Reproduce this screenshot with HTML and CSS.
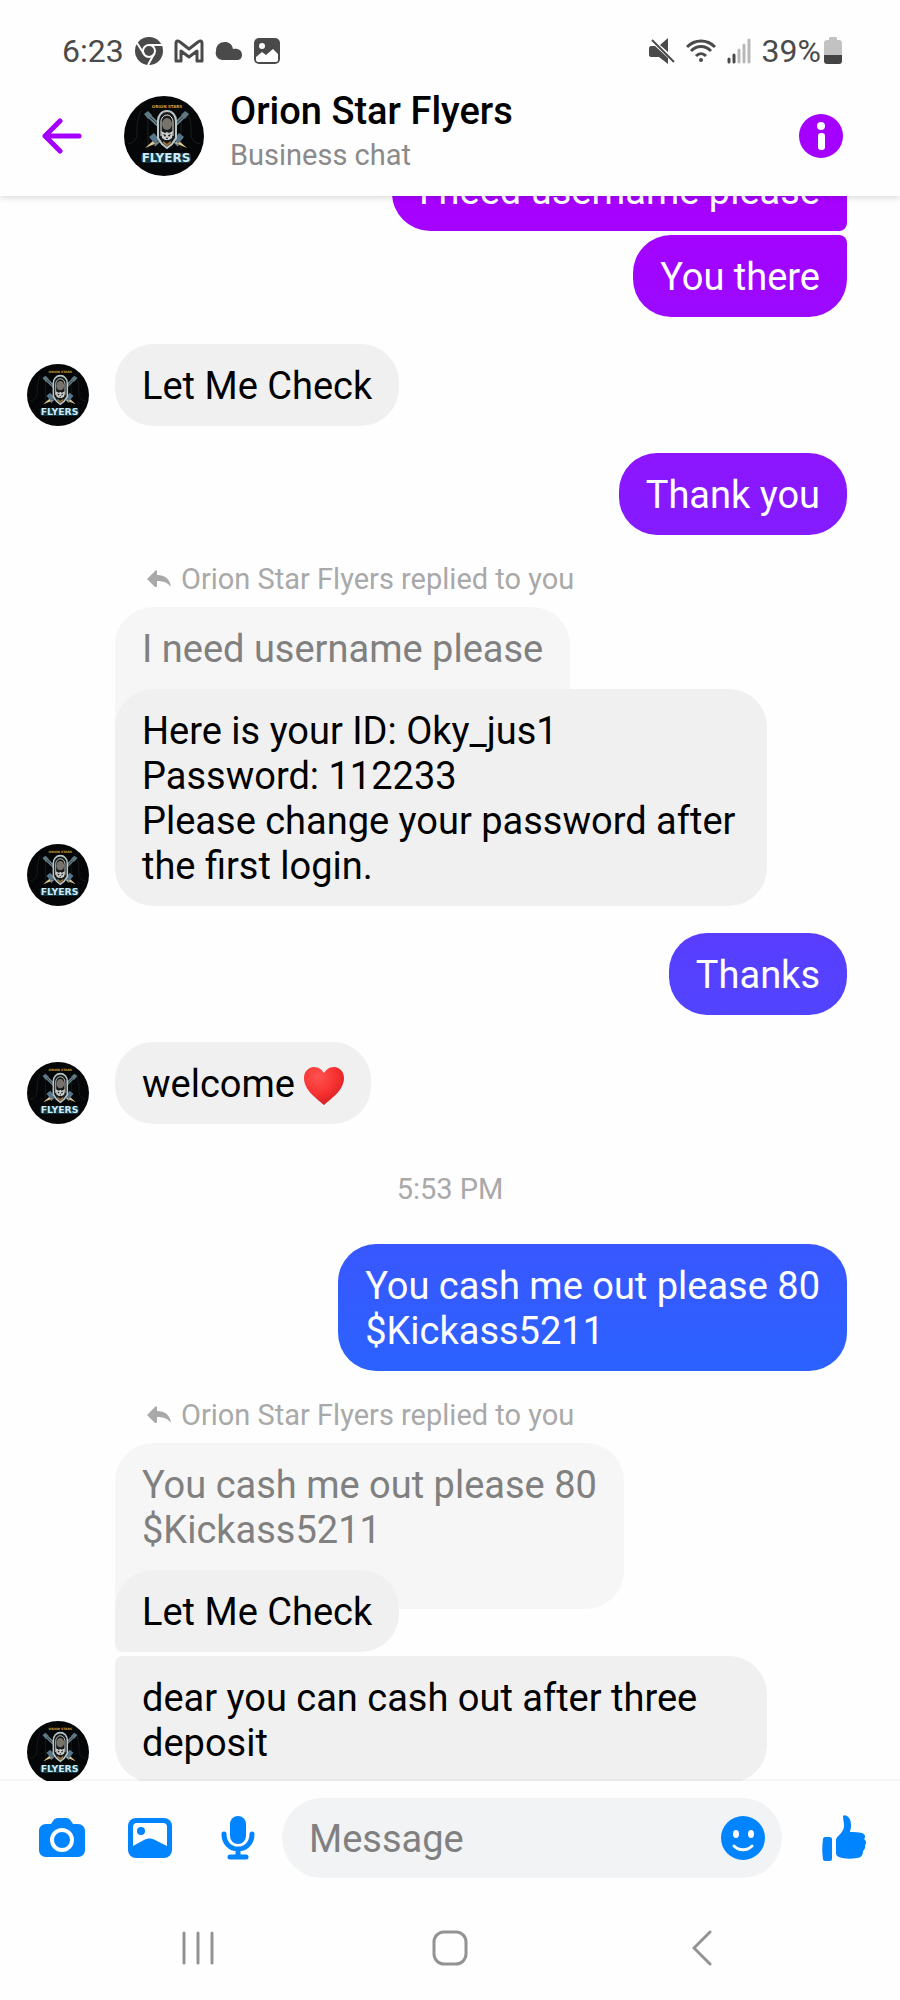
FILE: index.html
```
<!DOCTYPE html>
<html lang="en">
<head>
    <meta charset="UTF-8">
    <meta name="viewport" content="width=device-width, initial-scale=1.0">
    <title>Orion Star Flyers</title>
    <link rel="stylesheet" href="styles.css">
</head>
<body>
    <!-- shared drawings -->
    <svg class="defs" aria-hidden="true">
        <symbol id="logo" viewBox="0 0 80 80">
            <circle cx="40" cy="40" r="40" fill="#050607"/>
            <path d="M4 48c8-2 9-6 9-14s2-15 4-19M76 48c-8-2-9-6-9-14s-2-15-4-19M24 20v34M57 20v34" fill="none" stroke="#1b2023" stroke-width="1"/>
            <text x="43" y="12" class="logo-top">ORION STARS</text>
            <path d="M24 19l31 30M61 19L30 49" stroke="#6c828b" stroke-width="4"/>
            <path d="M24 19l31 30M61 19L30 49" stroke="#26343a" stroke-width="1"/>
            <path d="M20 18l4-3 4 4-4 4zM65 18l-4-3-4 4 4 4z" fill="#5f7984"/>
            <path d="M21 52l9-8 3 3zM63 52l-9-8-3 3z" fill="#e0c48c"/>
            <path d="M25 41l5-4 5 6-4 5zM60 41l-5-4-5 6 4 5z" fill="#55758a"/>
            <path d="M34 42V25c0-6 4-10 9-10s9 4 9 10v17l-4 6-5 4-5-4z" fill="#171a1b" stroke="#b9c6c9" stroke-width="2"/>
            <path d="M37 40V26c0-4 3-7 6-7s6 3 6 7v14" fill="none" stroke="#e4e4df" stroke-width="1"/>
            <ellipse cx="43" cy="28" rx="5" ry="6" fill="#77736b"/>
            <path d="M37 35l4 2 2-1 2 1 4-2-1 7-3 2h-4l-3-2z" fill="#c9cdca"/>
            <path d="M39 38l3 1-1 2zM47 38l-3 1 1 2zM43 41l1 2h-2z" fill="#111"/>
            <path d="M39 46l4 3 4-3" fill="none" stroke="#98713c" stroke-width="2"/>
            <rect x="17" y="57" width="50" height="10" rx="3" fill="#16333d"/>
            <text x="42" y="66" class="logo-name">FLYERS</text>
        </symbol>
        <symbol id="reply" viewBox="0 0 24 18">
            <path d="M10 1v4c8 0 13 4 14 12-3-4-7-6-14-6v5c0 1-1 1-2 1L1 10c-1-1-1-1 0-2l7-7c1-1 2-1 2 0z" fill="currentColor"/>
        </symbol>
    </svg>

    <div class="status-bar">
        <span class="time">6:23</span>
        <svg class="chrome" width="28" height="28" viewBox="0 0 28 28">
            <circle cx="14" cy="14" r="14" fill="#4a4a4a"/>
            <circle cx="14" cy="14" r="6" fill="none" stroke="#fff" stroke-width="2"/>
            <path d="M14 8h13M9 17L2 6M19 17l-6 11" stroke="#fff" stroke-width="2"/>
        </svg>
        <svg width="30" height="24" viewBox="0 0 30 24" fill="none" stroke="#4a4a4a" stroke-width="3" stroke-linejoin="round">
            <path d="M2 4c0-2 2-3 4-1l9 7 9-7c2-2 4-1 4 1v18h-5V12l-8 6-8-6v10H2z"/>
        </svg>
        <svg width="28" height="20" viewBox="0 0 28 20">
            <path d="M7 19a7 7 0 0 1-6-9C1 4 5 1 10 1c4 0 7 2 8 7 5-1 9 1 9 6 0 3-2 5-5 5z" fill="#4a4a4a"/>
        </svg>
        <svg width="26" height="26" viewBox="0 0 26 26">
            <rect width="26" height="26" rx="5" fill="#4a4a4a"/>
            <circle cx="8" cy="8" r="3" fill="#fff"/>
            <path d="M2 19l6-5 4 3 7-6 5 5v6c0 1-1 2-2 2H4c-1 0-2-1-2-2z" fill="#fff"/>
        </svg>
        <span class="spacer"></span>
        <svg class="mute" width="26" height="26" viewBox="0 0 26 26">
            <path d="M2 8h4l13 12v6l-9-7H2c-1 0-2-1-2-2v-7c0-1 1-2 2-2zM11 7l8-7v14z" fill="#4a4a4a"/>
            <path d="M3 2l22 22" stroke="#4a4a4a" stroke-width="2"/>
        </svg>
        <svg class="wifi" width="30" height="24" viewBox="0 0 30 24" fill="none" stroke="#4a4a4a" stroke-width="3">
            <path d="M1 8c8-8 20-8 28 0M5 12c6-6 14-6 20 0M10 17c3-3 7-3 10 0"/>
            <circle cx="15" cy="21" r="2" fill="#4a4a4a" stroke="none"/>
        </svg>
        <svg class="signal" width="24" height="26" viewBox="0 0 24 26" stroke-width="3" stroke-linecap="round">
            <path d="M2 21v3M7 17v7" stroke="#4a4a4a"/>
            <path d="M12 12v12M17 7v17M22 2v22" stroke="#b8b8b8"/>
        </svg>
        <span>39%</span>
        <svg class="battery" width="18" height="28" viewBox="0 0 18 28">
            <path d="M5 1c0-1 1-1 1-1h6s1 0 1 1v2h2c2 0 3 1 3 3v12H0V6c0-2 1-3 3-3h2z" fill="#c2c2c2"/>
            <path d="M0 18h18v6c0 2-1 3-3 3H3c-2 0-3-1-3-3z" fill="#444"/>
        </svg>
    </div>

    <header class="header">
        <button class="icon-button" aria-label="Back">
            <svg width="40" height="36" viewBox="0 0 40 36" fill="none" stroke="#a500ff" stroke-width="5" stroke-linecap="round" stroke-linejoin="round">
                <path d="M37 18H3M18 3L3 18l15 15"/>
            </svg>
        </button>
        <svg class="header-avatar"><use href="#logo"/></svg>
        <div class="header-text">
            <h1>Orion Star Flyers</h1>
            <p>Business chat</p>
        </div>
        <button class="icon-button" aria-label="Chat information">
            <svg width="44" height="44" viewBox="0 0 44 44">
                <circle cx="22" cy="22" r="22" fill="#a500ff"/>
                <circle cx="22" cy="12" r="4" fill="#fff"/>
                <rect x="19" y="19" width="7" height="17" rx="3" fill="#fff"/>
            </svg>
        </button>
    </header>

    <main class="chat">
        <div class="messages">
            <div class="group sent">
                <div class="bubble first">I need username please</div>
                <div class="bubble last">You there</div>
            </div>

            <div class="group">
                <svg class="avatar"><use href="#logo"/></svg>
                <div class="stack">
                    <div class="bubble">Let Me Check</div>
                </div>
            </div>

            <div class="group sent">
                <div class="bubble">Thank you</div>
            </div>

            <div class="group">
                <svg class="avatar"><use href="#logo"/></svg>
                <div class="stack">
                    <div class="reply-label"><svg><use href="#reply"/></svg>Orion Star Flyers replied to you</div>
                    <div class="bubble quote">I need username please</div>
                    <div class="bubble">Here is your ID: Oky_jus1<br>Password: 112233<br>Please change your password after the first login.</div>
                </div>
            </div>

            <div class="group sent">
                <div class="bubble">Thanks</div>
            </div>

            <div class="group">
                <svg class="avatar"><use href="#logo"/></svg>
                <div class="stack">
                    <div class="bubble">welcome
                        <svg class="heart" viewBox="0 0 40 38" role="img" aria-label="red heart">
                            <defs>
                                <radialGradient id="heartFill" cx="35%" cy="25%" r="80%">
                                    <stop offset="0" stop-color="#ff5350"/>
                                    <stop offset="0.6" stop-color="#f5302f"/>
                                    <stop offset="1" stop-color="#cf1b22"/>
                                </radialGradient>
                            </defs>
                            <path d="M20 38C12 31 0 23 0 11 0 4 5 0 10 0c5 0 8 3 10 6 2-3 5-6 10-6 5 0 10 4 10 11 0 12-12 20-20 27z" fill="url(#heartFill)"/>
                        </svg>
                    </div>
                </div>
            </div>

            <div class="timestamp">5:53 PM</div>

            <div class="group sent">
                <div class="bubble">You cash me out please 80<br>$Kickass5211</div>
            </div>

            <div class="group">
                <svg class="avatar"><use href="#logo"/></svg>
                <div class="stack">
                    <div class="reply-label"><svg><use href="#reply"/></svg>Orion Star Flyers replied to you</div>
                    <div class="bubble quote">You cash me out please 80<br>$Kickass5211</div>
                    <div class="bubble first">Let Me Check</div>
                    <div class="bubble last">dear you can cash out after three deposit</div>
                </div>
            </div>
        </div>
    </main>

    <footer class="composer">
        <button class="icon-button" aria-label="Camera">
            <svg width="48" height="40" viewBox="0 0 48 40">
                <path d="M15 3c1-2 3-3 5-3h8c2 0 4 1 5 3l2 3h5c4 0 7 3 7 7v19c0 4-3 7-7 7H8c-4 0-7-3-7-7V13c0-4 3-7 7-7h5z" fill="#0084ff"/>
                <circle cx="24" cy="22" r="10" fill="none" stroke="#fff" stroke-width="4"/>
            </svg>
        </button>
        <button class="icon-button" aria-label="Photos">
            <svg width="44" height="40" viewBox="0 0 44 40">
                <rect width="44" height="40" rx="8" fill="#0084ff"/>
                <path d="M5 9c0-2 1-4 4-4h26c3 0 4 2 4 4v19l-12-6c-4-2-7-2-11 0L5 28z" fill="#fff"/>
                <circle cx="13" cy="13" r="4" fill="#0084ff"/>
            </svg>
        </button>
        <button class="icon-button" aria-label="Voice message">
            <svg width="34" height="44" viewBox="0 0 34 44">
                <rect x="9" y="0" width="16" height="28" rx="8" fill="#0084ff"/>
                <path d="M3 18c0 9 6 15 14 15s14-6 14-15M17 33v8M9 41h16" fill="none" stroke="#0084ff" stroke-width="5" stroke-linecap="round"/>
            </svg>
        </button>
        <div class="message-box">
            <input type="text" placeholder="Message" aria-label="Message">
            <button class="emoji-button" aria-label="Choose an emoji">
                <svg width="44" height="44" viewBox="0 0 44 44">
                    <circle cx="22" cy="22" r="22" fill="#0084ff"/>
                    <ellipse cx="15" cy="18" rx="3" ry="4" fill="#fff"/>
                    <ellipse cx="30" cy="18" rx="3" ry="4" fill="#fff"/>
                    <path d="M13 30c5 5 13 5 18 0" fill="none" stroke="#fff" stroke-width="3" stroke-linecap="round"/>
                </svg>
            </button>
        </div>
        <button class="icon-button like" aria-label="Like">
            <svg width="44" height="46" viewBox="0 0 44 46" fill="#0084ff">
                <path d="M3 22h5c1 0 2 1 2 2v20c0 1-1 2-2 2H3c-1 0-2-1-2-2-1-6-1-13 0-20 0-1 1-2 2-2z"/>
                <path d="M21 1c1-1 2-1 4 0 4 2 5 9 3 16 4 0 8 0 12 1 3 1 4 4 2 6 3 2 2 5 1 6 1 3-1 5-2 6 0 4-2 7-6 7-6 1-13 1-18-1-2-1-3-2-3-4V25c0-4 8-7 8-14 0-4-1-7-1-10z"/>
            </svg>
        </button>
    </footer>

    <nav class="system-nav">
        <button aria-label="Recent apps">
            <svg width="34" height="34" viewBox="0 0 34 34" stroke="#939393" stroke-width="3" stroke-linecap="round">
                <path d="M3 2v30M17 2v30M31 2v30"/>
            </svg>
        </button>
        <button aria-label="Home">
            <svg width="36" height="36" viewBox="0 0 36 36">
                <rect x="2" y="2" width="32" height="32" rx="10" fill="none" stroke="#939393" stroke-width="3"/>
            </svg>
        </button>
        <button aria-label="Back">
            <svg width="20" height="36" viewBox="0 0 20 36" fill="none" stroke="#939393" stroke-width="3" stroke-linecap="round">
                <path d="M18 2L2 18l16 16"/>
            </svg>
        </button>
    </nav>
</body>
</html>
```
FILE: styles.css
```
* {
    box-sizing: border-box;
}
body {
    display: flex;
    flex-direction: column;
    height: 100vh;
    margin: 0;
    background-color: #fefefe;
    color: #000;
    font-family: Roboto, Arial, sans-serif;
}
svg {
    display: block;
    flex: none;
}
button {
    display: flex;
    align-items: center;
    justify-content: center;
    padding: 0;
    border: none;
    background: none;
    cursor: pointer;
}
.defs {
    display: none;
}
.logo-top {
    font: bold 4px "DejaVu Sans", sans-serif;
    fill: #d2a23c;
    text-anchor: middle;
}
.logo-name {
    font: bold 12px "DejaVu Sans", sans-serif;
    fill: #c9edfa;
    text-anchor: middle;
}

/* phone status bar */
.status-bar {
    display: flex;
    align-items: center;
    flex: none;
    gap: 11px;
    padding: 27px 58px 0 62px;
    color: #4a4a4a;
    font-size: 32px;
    line-height: 48px;
}
.status-bar .spacer {
    flex: 1;
}
.status-bar .battery {
    margin-left: -8px;
}

/* header */
.header {
    position: relative;
    z-index: 1;
    display: flex;
    align-items: center;
    flex: none;
    height: 121px;
    padding: 0 35px 0 18px;
    background-color: #fefefe;
    box-shadow: 0 2px 6px rgba(0, 0, 0, 0.14);
    clip-path: inset(0 0 -10px 0);
}
.icon-button {
    flex: none;
    width: 88px;
    height: 80px;
}
.header-avatar {
    width: 80px;
    height: 80px;
    margin: 0 26px 0 18px;
}
.header-text {
    flex: 1;
}
.header-text h1 {
    margin: 0;
    font-size: 38px;
    font-weight: 500;
    line-height: 38px;
}
.header-text p {
    margin: 0;
    color: #8a8a8a;
    font-size: 29px;
    line-height: 50px;
}

/* conversation, kept scrolled to the newest message */
.chat {
    display: flex;
    flex: 1;
    flex-direction: column;
    justify-content: flex-end;
    min-height: 0;
    overflow: hidden;
}
.messages {
    display: flex;
    flex: none;
    flex-direction: column;
    gap: 27px;
    margin-bottom: -2px;
}
.group {
    display: flex;
    align-items: flex-end;
    gap: 26px;
    padding: 0 53px 0 27px;
}
.group.sent {
    flex-direction: column;
    gap: 4px;
}
.stack {
    display: flex;
    flex-direction: column;
    align-items: flex-start;
    gap: 4px;
}
.avatar {
    width: 62px;
    height: 62px;
}
.bubble {
    max-width: 652px;
    padding: 20px 27px 17px;
    border-radius: 38px;
    background-color: #f0f0f0;
    font-size: 38px;
    line-height: 45px;
}
.stack .first {
    border-bottom-left-radius: 8px;
}
.stack .last {
    border-top-left-radius: 8px;
}
.sent .bubble {
    background: linear-gradient(#a700ff 10%, #0084ff 89%) fixed;
    color: #fff;
}
.sent .first {
    border-bottom-right-radius: 8px;
}
.sent .last {
    border-top-right-radius: 8px;
}
.bubble.quote {
    margin-bottom: -43px;
    padding-bottom: 56px;
    border-bottom-left-radius: 0;
    background-color: #f6f6f6;
    color: #808080;
}
.reply-label {
    display: flex;
    align-items: center;
    gap: 10px;
    margin-bottom: 7px;
    padding-left: 32px;
    color: #a9a9a9;
    font-size: 29px;
    line-height: 34px;
}
.reply-label svg {
    width: 24px;
    height: 18px;
}
.heart {
    display: inline-block;
    width: 40px;
    height: 38px;
    vertical-align: -8px;
}
.timestamp {
    margin: 21px 0 11px;
    color: #a9a9a9;
    font-size: 29px;
    line-height: 34px;
    text-align: center;
}

/* message composer */
.composer {
    position: relative;
    display: flex;
    align-items: center;
    flex: none;
    margin-top: -2px;
    padding: 17px 12px 17px 18px;
    border-top: 2px solid rgba(0, 0, 0, 0.03);
    background-color: #fefefe;
    background-clip: padding-box;
}
.message-box {
    display: flex;
    align-items: center;
    flex: 1;
    min-width: 0;
    height: 80px;
    padding: 0 17px 0 27px;
    border-radius: 40px;
    background-color: #f1f3f5;
}
.message-box input {
    flex: 1;
    min-width: 0;
    padding: 2px 0 0;
    border: none;
    outline: none;
    background: none;
    font-family: inherit;
    font-size: 38px;
}
.message-box input::placeholder {
    color: #808080;
}
.like {
    margin-left: 18px;
}

/* phone navigation */
.system-nav {
    display: grid;
    grid-template-columns: repeat(3, 1fr);
    flex: none;
    height: 105px;
    padding: 0 8%;
}
```
